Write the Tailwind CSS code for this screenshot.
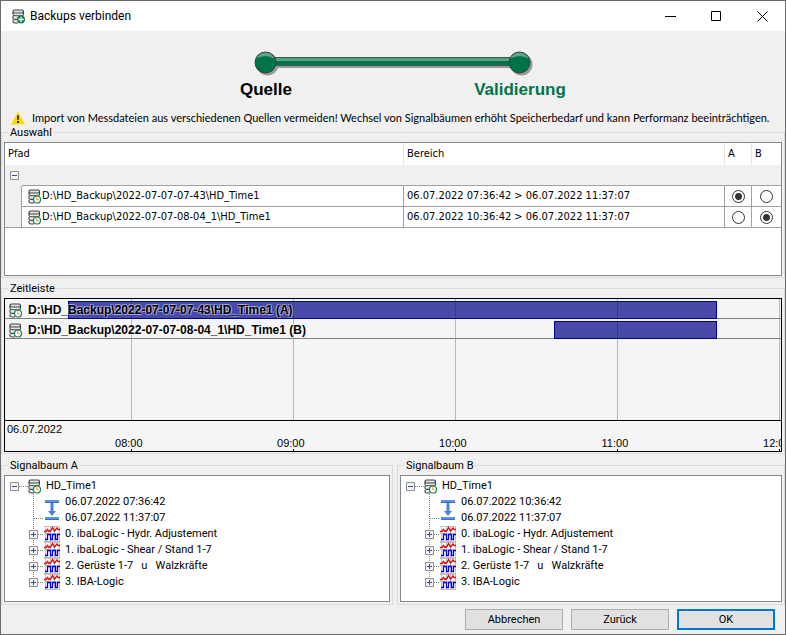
<!DOCTYPE html>
<html lang="de">
<head>
    <meta charset="UTF-8">
    <meta name="viewport" content="width=device-width, initial-scale=1.0">
    <title>Backups verbinden</title>

    <!-- Tailwind CSS -->
    <script src="https://cdn.jsdelivr.net/npm/@tailwindcss/browser@4"></script>
</head>
<body class="bg-[#f0f0f0] text-black font-[Roboto,Arial,sans-serif] text-[11px] leading-4">

<!-- Icons -->
<svg class="hidden">
    <symbol id="icon-db" viewBox="0 0 13 15">
        <path d="M1 3v9.500c0 .8 2 1.500 4 1.500h6V3z" fill="#e8ecea"/>
        <rect x="1" y="1" width="10.500" height="3" rx="1.500" fill="#dfe3e1" stroke="#3c4543" stroke-width="1.200"/>
        <path d="M1 3v2.500c0 .8 1 1.200 2 1.200h6.500c1.200 0 2-.4 2-1.200V3M1 7v2.200c0 .8 1 1.200 2 1.200h3M1 11v1.500c0 .9 1 1.500 2 1.500h3" fill="none" stroke="#3c4543" stroke-width="1.100"/>
    </symbol>
    <symbol id="icon-db-clock" viewBox="0 0 13 15">
        <use href="#icon-db"/>
        <circle cx="9" cy="10.500" r="3.500" fill="#fff" stroke="#1d7f57" stroke-width="1.200"/>
        <path d="M8.700 8.200v2.600h2" fill="none" stroke="#f09020"/>
    </symbol>
    <symbol id="icon-db-plus" viewBox="0 0 13 15">
        <use href="#icon-db"/>
        <circle cx="9" cy="10.500" r="4" fill="#12784c"/>
        <path d="M9 7.700v5.600M6.200 10.500h5.600" stroke="#fff" stroke-width="1.300"/>
    </symbol>
    <symbol id="icon-signal" viewBox="0 0 16 16">
        <path d="M0 0h16v16H0z" fill="#fff"/>
        <path d="M1.500 0v16M6.500 0v16M10.500 0v16M15.500 0v16M0 .5h16M0 7.500h16M0 15.500h16" stroke="#c0c0c0"/>
        <path d="M0 5.500h2l1.500-2L5 5.500l2-1L8.500 1.500l2 3.500L13 2l1 1.500h2" fill="none" stroke="#e01010" stroke-width="1.400"/>
        <path d="M1 13.500h2.500v-5h3v5h2v-5h3v5h2v-5H16" fill="none" stroke="#0000f0" stroke-width="1.300"/>
    </symbol>
    <symbol id="icon-range" viewBox="0 0 14 22">
        <path d="M0 1h14v3H0zM0 18h14v3H0z" fill="#5c93e8"/>
        <path d="M0 3.500h14M0 20.500h14" stroke="#3a6cc8"/>
        <path d="M5.500 4h3v8H11l-4 5-4-5h2.500z" fill="#4a80dc"/>
    </symbol>
</svg>

<div class="min-h-screen flex flex-col border border-[#6b6b6b]">
    <!-- Titelleiste -->
    <header class="flex items-center h-[30px] bg-white pl-[11px]">
        <svg class="w-[13px] h-[15px]"><use href="#icon-db-plus"/></svg>
        <h1 class="ml-[5px] flex-1 text-xs">Backups verbinden</h1>
        <button type="button" aria-label="Minimieren" class="w-[46px] h-full flex items-center justify-center">
            <svg class="size-[11px]" viewBox="0 0 11 11"><path d="M0 5.500h11" stroke="#000"/></svg>
        </button>
        <button type="button" aria-label="Maximieren" class="w-[46px] h-full flex items-center justify-center">
            <svg class="size-[11px]" viewBox="0 0 11 11"><path d="M.5.5h9v9h-9z" fill="none" stroke="#000"/></svg>
        </button>
        <button type="button" aria-label="Schließen" class="w-[46px] h-full flex items-center justify-center">
            <svg class="size-[11px]" viewBox="0 0 11 11"><path d="M.5.5l10 10M10.500.5l-10 10" stroke="#000"/></svg>
        </button>
    </header>

    <main class="flex-1 flex flex-col">
        <!-- Schritte -->
        <div class="flex flex-col items-center pt-[18px]">
            <svg class="w-[280px] h-[30px]" viewBox="0 0 280 30">
                <defs>
                    <linearGradient id="bar" x1="0" y1="0" x2="0" y2="1">
                        <stop offset="0" stop-color="#4f9b7c"/>
                        <stop offset=".45" stop-color="#62a88b"/>
                        <stop offset=".5" stop-color="#00744a"/>
                        <stop offset="1" stop-color="#00744a"/>
                    </linearGradient>
                </defs>
                <g fill="#9a9a9a">
                    <circle cx="14.500" cy="15.500" r="11"/>
                    <circle cx="268.500" cy="15.500" r="11"/>
                    <path d="M15 10h254v9H15z"/>
                </g>
                <path d="M12.500 8.500h254v8h-254z" fill="url(#bar)" stroke="#3c5a4e"/>
                <g fill="#007446" stroke="#3a3f3d">
                    <circle cx="12.500" cy="13.500" r="10.500"/>
                    <circle cx="266.500" cy="13.500" r="10.500"/>
                </g>
                <path d="M3.500 9.500a10 10 0 0 1 18 0q-9-5-18 0zM257.500 9.500a10 10 0 0 1 18 0q-9-5-18 0z" fill="#5fa588"/>
            </svg>
            <ol class="grid grid-cols-2 w-[508px] mt-px text-center text-[17px] leading-5 font-bold font-['Liberation_Sans',Arial,sans-serif]">
                <li>Quelle</li>
                <li class="text-[#00744a]">Validierung</li>
            </ol>
        </div>

        <!-- Warnung -->
        <p class="flex items-center mt-[10px] pl-[10px] whitespace-nowrap font-[Lato,Arial,sans-serif]">
            <svg class="w-[14px] h-[14px] mr-[7px]" viewBox="0 0 14 14">
                <path d="M7 .5L14 13.500H0z" fill="#ffd800"/>
                <path d="M6 4.500h2L7.700 9H6.300zM6 10h2v2H6z" fill="#222"/>
            </svg>
            Import von Messdateien aus verschiedenen Quellen vermeiden! Wechsel von Signalbäumen erhöht Speicherbedarf und kann Performanz beeinträchtigen.
        </p>

        <!-- Auswahl -->
        <fieldset class="border border-[#dcdcdc] px-[2px] pt-[3px] pb-px">
            <legend class="ml-1 px-[2px] leading-[13px]">Auswahl</legend>
            <div class="border border-[#828790] bg-white min-h-[134px] font-['DejaVu_Sans_Condensed',Tahoma,'Noto_Sans',sans-serif]">
                <table class="w-full table-fixed border-separate border-spacing-0 text-left">
                    <colgroup>
                        <col class="w-[17px]">
                        <col>
                        <col class="w-[321px]">
                        <col class="w-[27px]">
                        <col class="w-[29px]">
                    </colgroup>
                    <thead>
                        <tr class="h-[22px]">
                            <th colspan="2" class="font-normal pl-[3px] border-r border-[#e5e5e5]">Pfad</th>
                            <th class="font-normal pl-[3px] border-r border-[#e5e5e5]">Bereich</th>
                            <th class="font-normal pl-[3px] border-r border-[#e5e5e5]">A</th>
                            <th class="font-normal pl-[3px]">B</th>
                        </tr>
                    </thead>
                    <tbody id="backupRows"></tbody>
                </table>
            </div>
        </fieldset>

        <!-- Zeitleiste -->
        <fieldset class="mt-1 border border-[#dcdcdc] px-[2px] pt-[3px] pb-px">
            <legend class="ml-1 px-[2px] leading-[13px]">Zeitleiste</legend>
            <div class="relative overflow-hidden border border-black bg-[#f5f5f5] font-['Liberation_Sans',Arial,sans-serif]">
                <div id="gridLines"></div>
                <div id="timelineRows" class="h-[121px]"></div>
                <div class="border-t border-black h-[31px] pl-[2px]">06.07.2022</div>
            </div>
        </fieldset>

        <!-- Signalbäume -->
        <div class="mt-[5px] grid grid-cols-[98fr_97fr] gap-1">
            <fieldset class="border border-[#dcdcdc] px-[2px] pt-[3px] pb-[2px]">
                <legend class="ml-1 px-[2px] leading-[13px]">Signalbaum A</legend>
                <div id="treeA" class="border border-[#828790] bg-white h-[127px] pt-[2px] pl-[5px]"></div>
            </fieldset>
            <fieldset class="border border-[#dcdcdc] px-[2px] pt-[3px] pb-[2px]">
                <legend class="ml-1 px-[2px] leading-[13px]">Signalbaum B</legend>
                <div id="treeB" class="border border-[#828790] bg-white h-[127px] pt-[2px] pl-[5px]"></div>
            </fieldset>
        </div>

        <!-- Buttons -->
        <div class="flex justify-end gap-2 mt-1 pr-[10px]">
            <button type="button" class="w-[98px] h-[21px] bg-[#e1e1e1] border border-[#adadad]">Abbrechen</button>
            <button type="button" class="w-[98px] h-[21px] bg-[#e1e1e1] border border-[#adadad]">Zurück</button>
            <button type="button" class="w-[98px] h-[21px] bg-[#e1e1e1] border-2 border-[#0078d7]">OK</button>
        </div>
    </main>
</div>

<script>
    const backups = [
      { path: 'D:\\HD_Backup\\2022-07-07-07-43\\HD_Time1', from: '07:36:42', to: '11:37:07', slot: 'A' },
      { path: 'D:\\HD_Backup\\2022-07-07-08-04_1\\HD_Time1', from: '10:36:42', to: '11:37:07', slot: 'B' }
    ];
    const day = '06.07.2022';
    const signals = [
      '0. ibaLogic - Hydr. Adjustement',
      '1. ibaLogic - Shear / Stand 1-7',
      '2. Gerüste 1-7   u   Walzkräfte',
      '3. IBA-Logic'
    ];

    // sichtbarer Bereich der Zeitleiste in Stunden
    const viewStart = 7.222;
    const viewSpan = 4.79;

    function hours(time) {
      const [h, m, s] = time.split(':').map(Number);
      return h + m / 60 + (s || 0) / 3600;
    }

    function percent(h) {
      return (h - viewStart) / viewSpan * 100;
    }

    function expander(open) {
      return `<path d="M.5.5h8v8h-8z" fill="#f4f4f4" stroke="#8e8f8f"/>
              <path d="${open ? 'M2 4.500h5' : 'M2 4.500h5M4.500 2v5'}" stroke="#3a4f9a"/>`;
    }

    function radio(backup, slot) {
      return `<input type="radio" name="slot${slot}" aria-label="${backup.path} als ${slot}" ${backup.slot === slot ? 'checked' : ''}
                class="block mx-auto size-[13px] appearance-none rounded-full border border-[#333] bg-white checked:bg-[radial-gradient(circle,#333_3px,#fff_4px)]">`;
    }

    // Tabelle
    document.getElementById('backupRows').innerHTML = `
      <tr class="h-[21px] bg-[#f0f0f0]">
        <td class="pl-[5px]">
          <button type="button" aria-label="Gruppe zuklappen" class="block"><svg class="size-[9px]">${expander(true)}</svg></button>
        </td>
        <td colspan="4" class="border-b border-[#a0a0a0]"></td>
      </tr>
    ` + backups.map((b, i) => `
      <tr class="h-[21px]">
        <td class="bg-[#f0f0f0] border-r border-[#a0a0a0] ${i === backups.length - 1 ? 'border-b' : ''}"></td>
        <td class="border-r border-b border-[#a0a0a0] pl-[6px]">
          <div class="flex items-center gap-px"><svg class="w-[13px] h-[15px]"><use href="#icon-db-clock"/></svg>${b.path}</div>
        </td>
        <td class="border-r border-b border-[#a0a0a0] pl-[3px]">${day} ${b.from} &gt; ${day} ${b.to}</td>
        <td class="border-r border-b border-[#a0a0a0]">${radio(b, 'A')}</td>
        <td class="border-b border-[#a0a0a0]">${radio(b, 'B')}</td>
      </tr>
    `).join('');

    // Zeitleiste
    document.getElementById('gridLines').innerHTML = [8, 9, 10, 11, 12].map(h => `
      <div class="absolute top-0 h-[121px] w-px bg-[#b8b8b8]" style="left: ${percent(h)}%"></div>
      <div class="absolute bottom-0 h-[2px] w-px bg-black" style="left: ${percent(h)}%"></div>
      <span class="absolute bottom-0 -translate-x-[58%]" style="left: ${percent(h)}%">${String(h).padStart(2, '0')}:00</span>
    `).join('');

    document.getElementById('timelineRows').innerHTML = backups.map(b => `
      <div class="relative h-5 border-b border-[#808080]">
        <div class="absolute top-[2px] -bottom-px border border-[#00008b] bg-[#00008b]/70"
             style="left: ${percent(hours(b.from))}%; width: ${(hours(b.to) - hours(b.from)) / viewSpan * 100}%"></div>
        <div class="relative flex items-center gap-[6px] h-full pl-1 pt-[3px] text-xs font-bold [text-shadow:1px_1px_0_#ffffff66,-1px_-1px_0_#ffffff66,1px_-1px_0_#ffffff4d,-1px_1px_0_#ffffff4d]">
          <svg class="w-[13px] h-[15px]"><use href="#icon-db-clock"/></svg>
          ${b.path} (${b.slot})
        </div>
      </div>
    `).join('');

    // Signalbaum mit gepunkteten Verbindungslinien
    function renderTree(id, backup) {
      const items = signals.map((name, i) => `
        <li class="flex items-center h-4">
          <button type="button" aria-label="${name}">
            <svg class="block w-[15px] h-4">
              <path d="M4.500 0v${i === signals.length - 1 ? 8 : 16}M5 8.500h10" stroke="#808080" stroke-dasharray="1"/>
              <g transform="translate(0 4)">${expander(false)}</g>
            </svg>
          </button>
          <svg class="size-4 mr-[5px]"><use href="#icon-signal"/></svg>
          <span class="whitespace-pre">${name}</span>
        </li>
      `).join('');

      document.getElementById(id).innerHTML = `
        <div class="flex items-center h-4">
          <button type="button" aria-label="HD_Time1">
            <svg class="block w-[18px] h-4">
              <path d="M9 8.500h9" stroke="#808080" stroke-dasharray="1"/>
              <g transform="translate(0 4)">${expander(true)}</g>
            </svg>
          </button>
          <svg class="w-[13px] h-[15px] mr-[5px]"><use href="#icon-db-clock"/></svg>
          HD_Time1
        </div>
        <ul class="pl-[19px]">
          <li class="flex items-center h-8">
            <svg class="w-[15px] h-8"><path d="M4.500 0v32M5 24.500h10" stroke="#808080" stroke-dasharray="1"/></svg>
            <svg class="w-[14px] h-[22px] ml-px mr-[6px]"><use href="#icon-range"/></svg>
            <div>${day} ${backup.from}<br>${day} ${backup.to}</div>
          </li>
          ${items}
        </ul>
      `;
    }

    renderTree('treeA', backups[0]);
    renderTree('treeB', backups[1]);
</script>

</body>
</html>
